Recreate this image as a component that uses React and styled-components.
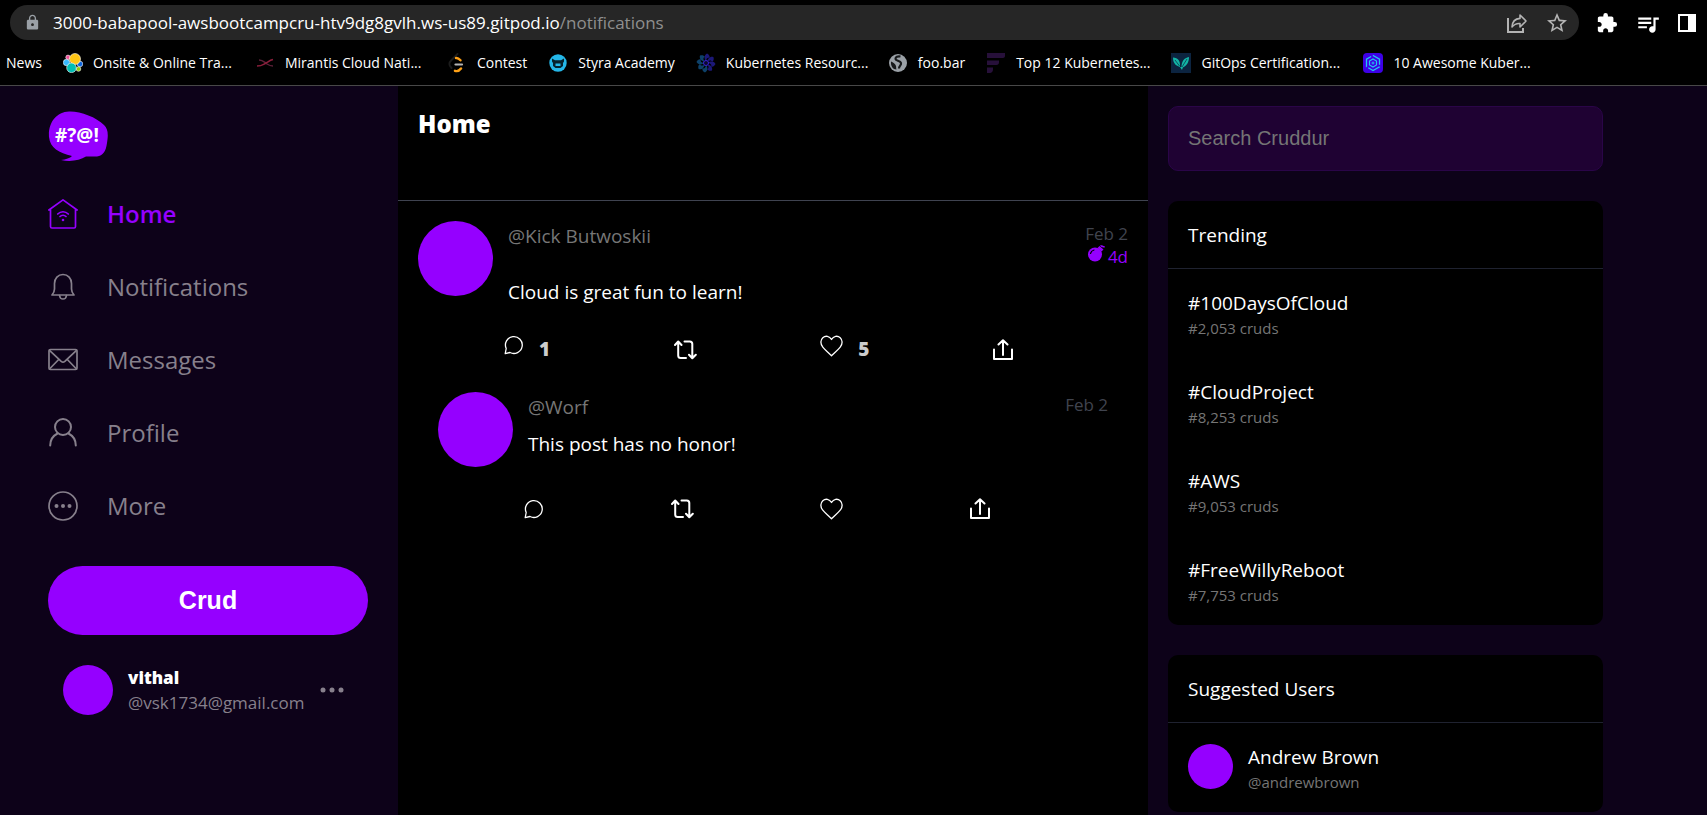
import React from 'react';
import styled, { createGlobalStyle, css } from 'styled-components';
import { MdExtension, MdLock, MdQueueMusic, MdStarBorder } from 'react-icons/md';

const purple = '#9500ff';
const night = '#0d0219';

const GlobalStyle = createGlobalStyle`
  *, *::before, *::after { box-sizing: border-box; }
  html { background: ${night}; }
  body {
    margin: 0;
    background: ${night};
    color: #fff;
    font-family: "Open Sans", "Noto Sans", sans-serif;
    font-size: 19px;
  }
  a { color: inherit; text-decoration: none; }
  button { margin: 0; padding: 0; border: 0; background: none; color: inherit; font: inherit; cursor: pointer; }
  h1, h2, p, ul { margin: 0; padding: 0; font-size: inherit; font-weight: inherit; list-style: none; }
  svg { display: block; flex: none; }
`;

/* ---------- Browser bar ---------- */

const Browser = styled.header`
  background: #000;
  border-bottom: 1px solid #484848;
`;

const AddressRow = styled.div`
  display: flex;
  align-items: center;
  gap: 16px;
  padding: 5px 8px 0 10px;
`;

const AddressBar = styled.div`
  flex: 1;
  min-width: 0;
  display: flex;
  align-items: center;
  gap: 12px;
  height: 35px;
  padding: 0 10px 0 14px;
  border-radius: 18px;
  background: #262626;
  color: #9aa0a6;
`;

const Url = styled.span`
  flex: 1;
  min-width: 0;
  overflow: hidden;
  white-space: nowrap;
  font-size: 17px;
  line-height: 24px;
  color: #8f8f8f;

  b { font-weight: 400; color: #fff; }
`;

const BarButton = styled.button`
  display: grid;
  place-items: center;
  width: 24px;
  height: 24px;
  color: ${(p) => (p.$bright ? '#fff' : '#b4b4b4')};
`;

const BarTools = styled.div`
  display: flex;
  gap: 16px;
`;

const Bookmarks = styled.nav`
  display: flex;
  align-items: center;
  gap: 21px;
  height: 45px;
  padding: 0 6px;
  overflow: hidden;
  white-space: nowrap;
  font-size: 14px;
  line-height: 20px;
`;

const Bookmark = styled.a`
  display: flex;
  align-items: center;
  gap: 10px;
  flex: none;
  width: ${(p) => (p.$full ? '171px' : 'auto')};
`;

/* ---------- Page frame ---------- */

const Page = styled.div`
  display: grid;
  grid-template-columns: 350px minmax(0, 1fr) 455px;
  min-height: calc(100vh - 86px);
  padding: 0 104px 0 48px;
`;

const Sidebar = styled.aside`
  display: flex;
  flex-direction: column;
  padding: 25px 30px 0 0;
`;

const NavList = styled.nav`
  display: flex;
  flex-direction: column;
  padding: 15px 0 24px;
`;

const NavLink = styled.a`
  display: flex;
  align-items: center;
  gap: 29px;
  height: 73px;
  font-size: 24px;
  line-height: 33px;
  color: ${(p) => (p.$active ? purple : '#87808c')};
  font-weight: ${(p) => (p.$active ? 600 : 400)};
`;

const CrudButton = styled.button`
  height: 69px;
  border-radius: 35px;
  background: ${purple};
  color: #fff;
  font-family: "Liberation Sans", Arial, sans-serif;
  font-size: 25px;
  font-weight: 700;
`;

const ProfileCard = styled.button`
  display: flex;
  align-items: center;
  gap: 15px;
  margin-top: 30px;
  padding: 0 24px 0 15px;
  text-align: left;

  svg { margin-left: auto; }
`;

const Avatar = styled.span`
  flex: none;
  width: ${(p) => p.$size}px;
  height: ${(p) => p.$size}px;
  border-radius: 50%;
  background: ${purple};
`;

const Stack = styled.span`
  display: flex;
  flex-direction: column;
`;

const ProfileName = styled.span`
  font-size: 17px;
  font-weight: 800;
  line-height: 26px;
`;

const ProfileHandle = styled.span`
  font-size: 17px;
  line-height: 24px;
  color: #87808c;
`;

/* ---------- Feed ---------- */

const Feed = styled.main`
  background: #000;
`;

const FeedHead = styled.div`
  height: 115px;
  padding: 21px 20px;
  border-bottom: 1px solid #3f4350;

  h1 { font-size: 24px; font-weight: 800; line-height: 34px; }
`;

const Post = styled.article`
  padding: 20px ${(p) => (p.$reply ? 40 : 20)}px 8px;
`;

const PostBody = styled.div`
  display: flex;
  gap: 15px;
  min-height: 75px;
`;

const PostMain = styled.div`
  flex: 1;
  min-width: 0;
  padding-top: 1px;
`;

const PostMeta = styled.div`
  display: flex;
  justify-content: space-between;
`;

const Handle = styled.a`
  line-height: 29px;
  color: #767676;
`;

const Times = styled.div`
  display: flex;
  flex-direction: column;
  align-items: flex-end;
  font-size: 17px;
  line-height: 23px;
  color: #40444f;
`;

const Expires = styled.span`
  display: flex;
  gap: 3px;
  color: ${purple};
`;

const Message = styled.p`
  margin-top: ${(p) => (p.$reply ? 8 : 10)}px;
  line-height: 29px;
`;

const Actions = styled.div`
  display: flex;
  align-items: center;
  justify-content: space-between;
  height: 29px;
  margin-top: ${(p) => (p.$reply ? 27 : 28)}px;
  padding: 0 ${(p) => (p.$reply ? 118 : 115)}px 0 86px;
`;

const Action = styled.button`
  display: flex;
  align-items: flex-start;
  gap: 15px;
  ${(p) => p.$counted && css`height: 29px;`}
`;

const Count = styled.span`
  font-weight: 800;
  line-height: 29px;
  color: #ccc;
`;

/* ---------- Right column ---------- */

const Aside = styled.aside`
  display: flex;
  flex-direction: column;
  gap: 30px;
  padding: 20px 0 3px 20px;
`;

const Search = styled.input`
  width: 100%;
  height: 65px;
  padding: 0 19px;
  border: 1px solid #2a0548;
  border-radius: 10px;
  outline: 0;
  background: #1f0233;
  color: #fff;
  font-family: "Liberation Sans", Arial, sans-serif;
  font-size: 20px;

  &::placeholder { color: #757575; opacity: 1; }
`;

const Card = styled.section`
  border-radius: 10px;
  background: #000;
`;

const CardTitle = styled.h2`
  padding: 21px 20px 19px;
  border-bottom: 1px solid #1f2230;
  line-height: 27px;
`;

const CardItem = styled.a`
  display: flex;
  gap: 15px;
  padding: 21px 20px 19px;
`;

const ItemTitle = styled.span`
  line-height: 27px;
`;

const ItemNote = styled.span`
  font-size: 15px;
  line-height: 22px;
  color: #757575;
`;

/* ---------- Drawings ---------- */

const ShareArrow = () => (
  <svg width="22" height="22" viewBox="0 0 22 22" fill="none" stroke="currentColor" strokeWidth="2">
    <path d="M2 6v14h15v-4" />
    <path d="M14 3l6 6-6 6v-3.500c-4-.3-6 1-8 3.500.3-5 3-8.300 8-8.600z" strokeWidth="1.600" strokeLinejoin="round" />
  </svg>
);

const SidePanel = () => (
  <svg width="20" height="20" viewBox="0 0 20 20">
    <path d="M1 1h18v18H1zM3 3v14h8V3z" fill="#fff" fillRule="evenodd" />
  </svg>
);

const Elastic = () => (
  <svg width="20" height="20" viewBox="0 0 20 20">
    <g stroke="#fff" strokeWidth=".6">
      <circle cx="3.500" cy="9.500" r="3.200" fill="#36b9ff" />
      <circle cx="17" cy="11" r="2.800" fill="#0b64dd" />
      <circle cx="5" cy="4.300" r="2.200" fill="#f04e98" />
      <circle cx="15.500" cy="16" r="2.300" fill="#93c90e" />
      <circle cx="12" cy="6" r="5.500" fill="#fec514" />
      <circle cx="8.500" cy="14.800" r="4.800" fill="#00bfb3" />
    </g>
  </svg>
);

const Mirantis = () => (
  <svg width="20" height="20" viewBox="0 0 20 20" fill="none">
    <path d="M4 7c4 0 5 2 8 4s3 2 6 2" stroke="#5c2138" strokeWidth="1.500" />
    <path d="M2 13c5 0 6-1.500 9-3S14 7.500 18 6.500" stroke="#8d1f3c" strokeWidth="1.500" />
  </svg>
);

const LeetCode = () => (
  <svg width="20" height="20" viewBox="0 0 20 20" fill="none" strokeLinecap="round">
    <path d="M10.500 1L4.500 7c-3 3-3 5 0 8" stroke="#1c1c1c" strokeWidth="2" />
    <path d="M9 5c2-.3 3 .7 4.500 2.300" stroke="#ffa116" strokeWidth="2.400" />
    <path d="M8.500 11.500H15" stroke="#b3b3b3" strokeWidth="2.200" />
    <path d="M8 17.800c2.500 1 4.500-.3 6-2.300" stroke="#ffa116" strokeWidth="2.400" />
  </svg>
);

const Styra = () => (
  <svg width="20" height="20" viewBox="0 0 20 20">
    <circle cx="10" cy="10" r="8.700" fill="#24b6e8" />
    <path d="M4 5.500l3 1.700h6l3-1.700v3l-1 1.500v3l-2.500 2h-5L5 13v-3L4 8.500z" fill="#06222e" />
    <path d="M7.500 10.500h5V13h-5z" fill="#24b6e8" />
  </svg>
);

const Swirl = () => (
  <svg width="20" height="20" viewBox="0 0 20 20">
    {[0, 45, 90, 135, 180, 225, 270, 315].map((turn) => (
      <path
        key={turn}
        d="M10 8C8 6 8 2 11 .5c2 1 3 2.500 2.500 4.500C12 4 10.500 5 10 8z"
        fill={turn < 180 ? '#1c1878' : '#0d4169'}
        transform={`rotate(${turn} 10 10)`}
      />
    ))}
    <circle cx="10" cy="10" r="2.500" fill="#0a0a2c" stroke="#3a22d8" />
  </svg>
);

const Globe = () => (
  <svg width="20" height="20" viewBox="0 0 20 20">
    <circle cx="10" cy="10" r="9" fill="#9aa0a6" />
    <path d="M12.500 3.500c-3-.5-5 .5-5 2.500s5 1.500 5.500 4-2 2.500-2 5.500" fill="none" stroke="#17191b" strokeWidth="2.200" />
    <path d="M3 8.500c2 1 4.500 2 5 4.500.3 1.500 0 2.500.5 3.500C5 16.500 2.500 13 3 8.500z" fill="#17191b" />
  </svg>
);

const Bars = () => (
  <svg width="20" height="20" viewBox="0 0 20 20" fill="#27103a">
    <path d="M1 0h18v3c0 1-1 2-2 2H1zM1 7.500h12v2c0 1.500-1 2.500-2.500 2.500H1zM1 14.500h6v2C7 18.500 5.500 20 4 20H1z" />
  </svg>
);

const Leaf = () => (
  <svg width="20" height="20" viewBox="0 0 20 20">
    <path d="M0 0h20v20H0z" fill="#0c2440" />
    <path d="M2 4.500c5 .5 7.500 3 7 9.500C4 12.500 2 9.500 2 4.500zM18 4c-5 1-7.500 4-7.500 11C16 13 18 9 18 4zM9 14l2 3 1-3z" fill="#12b5a6" />
    <path d="M4 7l4.500 6M16 6l-5 8" stroke="#0c2440" strokeWidth=".7" />
  </svg>
);

const HexBadge = () => (
  <svg width="20" height="20" viewBox="0 0 20 20" fill="none" stroke="#22c7ee">
    <rect width="20" height="20" rx="4" fill="#3d00e6" stroke="none" />
    <path d="M10 2.500l6.500 3.700v7.600L10 17.500l-6.500-3.700V6.200z" strokeWidth="1.300" strokeDasharray="13 2" />
    <path d="M10 6l3.500 2v4L10 14l-3.500-2V8z" strokeWidth="1.200" />
    <circle cx="10" cy="10" r="1" />
  </svg>
);

const Logo = () => (
  <svg width="60" height="51" viewBox="0 0 60 51" role="img" aria-label="Cruddur">
    <path d="M21 .5C32 0 48 6 56 14c4 4 4.500 9 3 18-1 8-4 13-10 13.500H38c-6 4-16 5.500-25 3.500 5-.5 9-2 11-4C11 42 2 37 1 26 0 12 8 1 21 .5z" fill={purple} />
    <text x="7" y="31" fill="#fff" fontFamily="Open Sans, sans-serif" fontSize="19" fontWeight="700">#?@!</text>
  </svg>
);

const navIcon = { width: 30, height: 30, viewBox: '0 0 30 30', fill: 'none', stroke: 'currentColor', strokeWidth: 1.7, strokeLinecap: 'round', strokeLinejoin: 'round' };

const HomeIcon = () => (
  <svg {...navIcon}>
    <path d="M.9 11L15 .9 29.100 11M2.500 10v17.500c0 .9.500 1.500 1.400 1.500h22.200c.9 0 1.400-.6 1.400-1.500V10" />
    <path d="M9.700 15c3-3 7.600-3 10.600 0M12 17.500c1.700-1.700 4.300-1.700 6 0" />
    <circle cx="15" cy="21" r="1.300" fill="currentColor" stroke="none" />
  </svg>
);

const BellIcon = () => (
  <svg {...navIcon}>
    <path d="M4 23c1.700-2 2.500-3.500 2.500-6v-5.500c0-5 3.500-9 8.500-9s8.500 4 8.500 9V17c0 2.500.8 4 2.500 6z" />
    <path d="M11.500 23.500c.3 2.300 1.700 3.500 3.500 3.500s3.200-1.200 3.500-3.500" />
  </svg>
);

const MailIcon = () => (
  <svg {...navIcon}>
    <rect x="1" y="4.500" width="28" height="20" rx="1.500" />
    <path d="M1.500 5.300l11.700 11c1.200 1 2.400 1 3.600 0l11.700-11M1.500 24l8.700-9M28.500 24l-8.700-9" />
  </svg>
);

const PersonIcon = () => (
  <svg {...navIcon} strokeWidth="2">
    <circle cx="15" cy="9" r="8" />
    <path d="M2.200 27.500c0-6 3.400-10 7.300-12M27.800 27.500c0-6-3.400-10-7.300-12" />
  </svg>
);

const MoreIcon = () => (
  <svg {...navIcon}>
    <circle cx="15" cy="15" r="14" />
    <g fill="currentColor" stroke="none">
      <circle cx="8.500" cy="15" r="2" />
      <circle cx="15" cy="15" r="2" />
      <circle cx="21.500" cy="15" r="2" />
    </g>
  </svg>
);

const Dots = () => (
  <svg width="24" height="6" viewBox="0 0 24 6" fill="#87808c">
    <circle cx="3" cy="3" r="2.500" />
    <circle cx="12" cy="3" r="2.500" />
    <circle cx="21" cy="3" r="2.500" />
  </svg>
);

const CommentIcon = () => (
  <svg width="20" height="20" viewBox="0 0 20 20" fill="none" stroke="#fff" strokeWidth="1.300" strokeLinejoin="round">
    <path d="M1.200 18.700l1-5.200A8.400 8.400 0 1 1 6 17.500z" />
  </svg>
);

const RepostIcon = () => (
  <svg width="23" height="20" viewBox="0 0 23 20" fill="none" stroke="#fff" strokeWidth="2" strokeLinecap="round" strokeLinejoin="round">
    <path d="M4.200 2v13.500c0 1.700.8 2.500 2.500 2.500H12M1 5l3.200-3.500L7.500 5M10.500 1.500h5.300c1.700 0 2.500.8 2.500 2.500v14M15 14.800l3.300 3.500 3.500-3.500" />
  </svg>
);

const HeartIcon = () => (
  <svg width="23" height="22" viewBox="0 0 23 22" fill="none" stroke="#fff" strokeWidth="1.300" strokeLinejoin="round">
    <path d="M11.500 20.800C9 18 5 15 2.800 12.200.2 9 .3 5 2.800 2.700 5.500.3 9.500.9 11.500 4.500c2-3.600 6-4.200 8.700-1.800 2.500 2.300 2.600 6.300 0 9.500-2.200 2.800-6.200 5.800-8.700 8.600z" />
  </svg>
);

const UploadIcon = () => (
  <svg width="20" height="21" viewBox="0 0 20 21" fill="none" stroke="#fff" strokeWidth="2" strokeLinecap="round" strokeLinejoin="round">
    <path d="M1 10.500V20h18v-9.500M10 16V1.500M5.500 5.500L10 1.200l4.500 4.300" />
  </svg>
);

const BombIcon = () => (
  <svg width="17" height="17" viewBox="0 0 17 17">
    <circle cx="7" cy="9.500" r="7" fill={purple} />
    <path d="M9.500 3l2-2 4 3.500-2 2zM12 .5c2-.6 3 .5 4.800.8l-.3 1.500-3-.8z" fill={purple} />
    <path d="M2.500 8.500C3 6.500 4 5.500 6 5" fill="none" stroke="#000" strokeWidth="1.200" strokeLinecap="round" />
  </svg>
);

/* ---------- Data ---------- */

const bookmarks = [
  { title: 'Onsite & Online Tra...', Icon: Elastic, full: true },
  { title: 'Mirantis Cloud Nati...', Icon: Mirantis, full: true },
  { title: 'Contest', Icon: LeetCode },
  { title: 'Styra Academy', Icon: Styra },
  { title: 'Kubernetes Resourc...', Icon: Swirl, full: true },
  { title: 'foo.bar', Icon: Globe },
  { title: 'Top 12 Kubernetes...', Icon: Bars },
  { title: 'GitOps Certification...', Icon: Leaf, full: true },
  { title: '10 Awesome Kuber...', Icon: HexBadge, full: true },
];

const navItems = [
  { label: 'Home', Icon: HomeIcon, active: true },
  { label: 'Notifications', Icon: BellIcon },
  { label: 'Messages', Icon: MailIcon },
  { label: 'Profile', Icon: PersonIcon },
  { label: 'More', Icon: MoreIcon },
];

const posts = [
  { handle: '@Kick Butwoskii', date: 'Feb 2', expires: '4d', text: 'Cloud is great fun to learn!', replies: 1, likes: 5 },
  { handle: '@Worf', date: 'Feb 2', text: 'This post has no honor!', reply: true },
];

const trends = [
  ['#100DaysOfCloud', '#2,053 cruds'],
  ['#CloudProject', '#8,253 cruds'],
  ['#AWS', '#9,053 cruds'],
  ['#FreeWillyReboot', '#7,753 cruds'],
];

function PostAction({ label, count, children }) {
  return (
    <Action type="button" aria-label={label} $counted={Boolean(count)}>
      {children}
      {count ? <Count>{count}</Count> : null}
    </Action>
  );
}

function PostItem({ post }) {
  return (
    <Post $reply={post.reply}>
      <PostBody>
        <Avatar $size={75} />
        <PostMain>
          <PostMeta>
            <Handle href="#profile">{post.handle}</Handle>
            <Times>
              <time>{post.date}</time>
              {post.expires && (
                <Expires>
                  <BombIcon />
                  {post.expires}
                </Expires>
              )}
            </Times>
          </PostMeta>
          <Message $reply={post.reply}>{post.text}</Message>
        </PostMain>
      </PostBody>
      <Actions $reply={post.reply}>
        <PostAction label="Reply" count={post.replies}><CommentIcon /></PostAction>
        <PostAction label="Repost"><RepostIcon /></PostAction>
        <PostAction label="Like" count={post.likes}><HeartIcon /></PostAction>
        <PostAction label="Share"><UploadIcon /></PostAction>
      </Actions>
    </Post>
  );
}

export default function App() {
  return (
    <>
      <GlobalStyle />
      <Browser>
        <AddressRow>
          <AddressBar>
            <MdLock size={17} />
            <Url><b>3000-babapool-awsbootcampcru-htv9dg8gvlh.ws-us89.gitpod.io</b>/notifications</Url>
            <BarTools>
              <BarButton type="button" aria-label="Share page"><ShareArrow /></BarButton>
              <BarButton type="button" aria-label="Bookmark"><MdStarBorder size={24} /></BarButton>
            </BarTools>
          </AddressBar>
          <BarTools>
            <BarButton type="button" $bright aria-label="Extensions"><MdExtension size={22} /></BarButton>
            <BarButton type="button" $bright aria-label="Media"><MdQueueMusic size={26} /></BarButton>
            <BarButton type="button" $bright aria-label="Side panel"><SidePanel /></BarButton>
          </BarTools>
        </AddressRow>
        <Bookmarks aria-label="Bookmarks">
          <Bookmark href="#news">News</Bookmark>
          {bookmarks.map(({ title, Icon, full }) => (
            <Bookmark key={title} href="#bookmark" $full={full}>
              <Icon />
              {title}
            </Bookmark>
          ))}
        </Bookmarks>
      </Browser>

      <Page>
        <Sidebar>
          <Logo />
          <NavList aria-label="Main">
            {navItems.map(({ label, Icon, active }) => (
              <NavLink key={label} href={`#${label.toLowerCase()}`} $active={active}>
                <Icon />
                {label}
              </NavLink>
            ))}
          </NavList>
          <CrudButton type="button">Crud</CrudButton>
          <ProfileCard type="button">
            <Avatar $size={50} />
            <Stack>
              <ProfileName>vithal</ProfileName>
              <ProfileHandle>@vsk1734@gmail.com</ProfileHandle>
            </Stack>
            <Dots />
          </ProfileCard>
        </Sidebar>

        <Feed>
          <FeedHead><h1>Home</h1></FeedHead>
          {posts.map((post) => <PostItem key={post.handle} post={post} />)}
        </Feed>

        <Aside>
          <Search type="text" placeholder="Search Cruddur" aria-label="Search Cruddur" />
          <Card>
            <CardTitle>Trending</CardTitle>
            {trends.map(([tag, note]) => (
              <CardItem key={tag} href="#trend">
                <Stack>
                  <ItemTitle>{tag}</ItemTitle>
                  <ItemNote>{note}</ItemNote>
                </Stack>
              </CardItem>
            ))}
          </Card>
          <Card>
            <CardTitle>Suggested Users</CardTitle>
            <CardItem href="#user">
              <Avatar $size={45} />
              <Stack>
                <ItemTitle>Andrew Brown</ItemTitle>
                <ItemNote>@andrewbrown</ItemNote>
              </Stack>
            </CardItem>
          </Card>
        </Aside>
      </Page>
    </>
  );
}
